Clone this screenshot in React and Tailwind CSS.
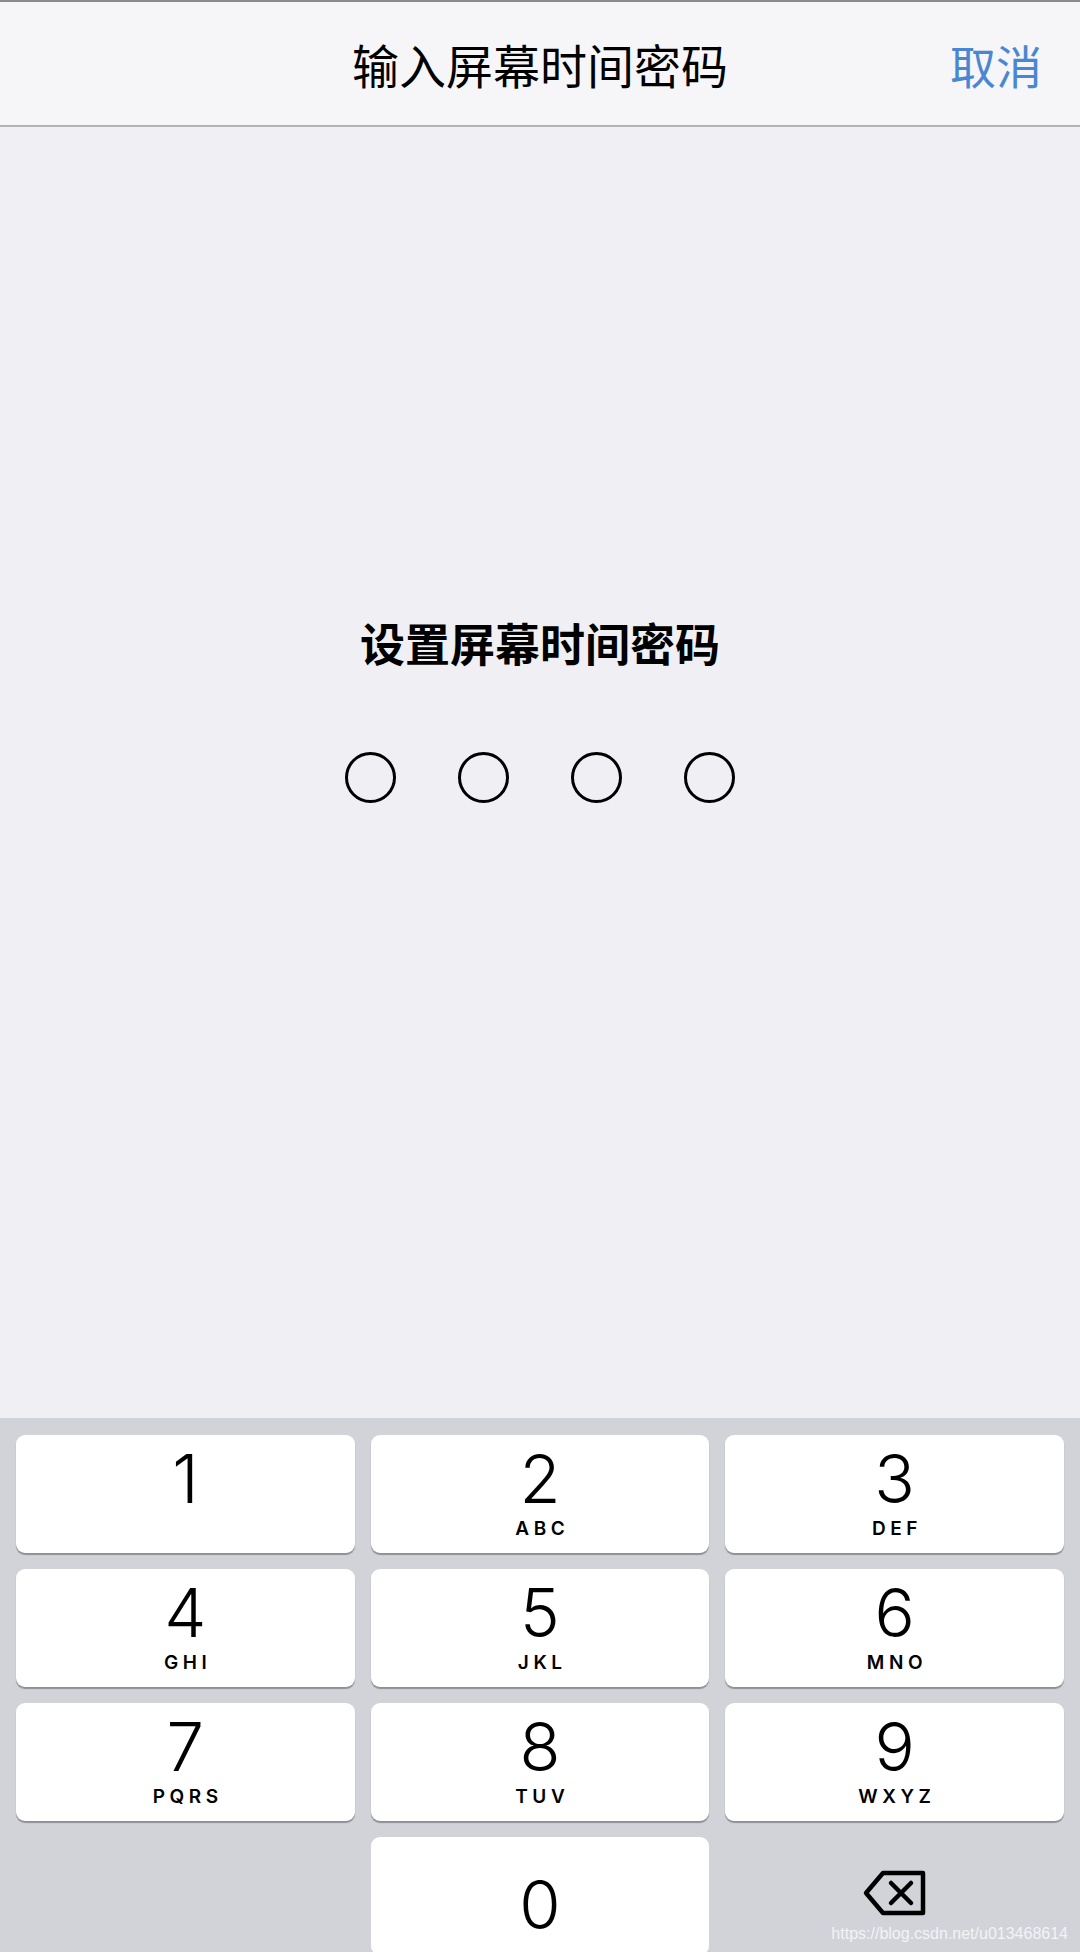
const keys = [
  { d: "1", l: "" },
  { d: "2", l: "ABC" },
  { d: "3", l: "DEF" },
  { d: "4", l: "GHI" },
  { d: "5", l: "JKL" },
  { d: "6", l: "MNO" },
  { d: "7", l: "PQRS" },
  { d: "8", l: "TUV" },
  { d: "9", l: "WXYZ" },
];

function Key({ d, l }) {
  return (
    <div className="flex h-[118px] flex-col items-center rounded-[9px] bg-white shadow-[0_2px_1px_#8e9096]">
      <span className="mt-[6px] h-[76px] font-['Inter'] text-[67px] font-light leading-[76px] text-black">{d}</span>
      <span className="font-['Inter'] text-[19px] font-semibold leading-[24px] tracking-[0.24em] text-black pl-[0.24em]">{l}</span>
    </div>
  );
}

function Backspace() {
  return (
    <svg width="64" height="46" viewBox="0 0 64 46" fill="none" stroke="black" strokeWidth="4.5" strokeLinejoin="round" strokeLinecap="round">
      <path d="M20 3 H60 V43 H20 L3 23 Z" />
      <path d="M28 13 L48 33 M48 13 L28 33" />
    </svg>
  );
}

export default function App() {
  return (
    <div className="flex h-[1952px] w-[1080px] flex-col overflow-hidden bg-[#efeff4] font-['Noto_Sans_CJK_SC',sans-serif]">
      <div className="relative flex h-[127px] shrink-0 items-center justify-center border-t-2 border-b-2 border-t-[#8a8a8a] border-b-[#b2b2b2] bg-[#f6f6f8]">
        <span className="text-[47px] font-normal leading-none text-black">输入屏幕时间密码</span>
        <span className="absolute right-[38px] top-1/2 -translate-y-1/2 text-[46px] leading-none text-[#4a87d2]">取消</span>
      </div>

      <div className="flex flex-1 flex-col items-center">
        <h1 className="mt-[490px] text-[45px] font-bold leading-[52px] text-black">设置屏幕时间密码</h1>
        <div className="mt-[83px] flex gap-[62px]">
          {[0, 1, 2, 3].map((i) => (
            <span key={i} className="h-[51px] w-[51px] rounded-full border-[3px] border-black" />
          ))}
        </div>
      </div>

      <div className="relative h-[534px] shrink-0 bg-[#d1d3d9] px-[16px] pt-[17px]">
        <div className="grid grid-cols-3 gap-[16px]">
          {keys.map((k) => (
            <Key key={k.d} {...k} />
          ))}
          <div />
          <div className="flex h-[118px] items-start justify-center rounded-[9px] bg-white pt-[30px]">
            <span className="font-['Inter'] text-[67px] font-light leading-[76px] text-black">0</span>
          </div>
          <div className="flex h-[118px] items-start justify-center pt-[33px]">
            <Backspace />
          </div>
        </div>
        <span className="absolute bottom-[10px] right-[12px] font-['Liberation_Sans',sans-serif] text-[16px] leading-none text-white/75">
          https://blog.csdn.net/u013468614
        </span>
      </div>
    </div>
  );
}
